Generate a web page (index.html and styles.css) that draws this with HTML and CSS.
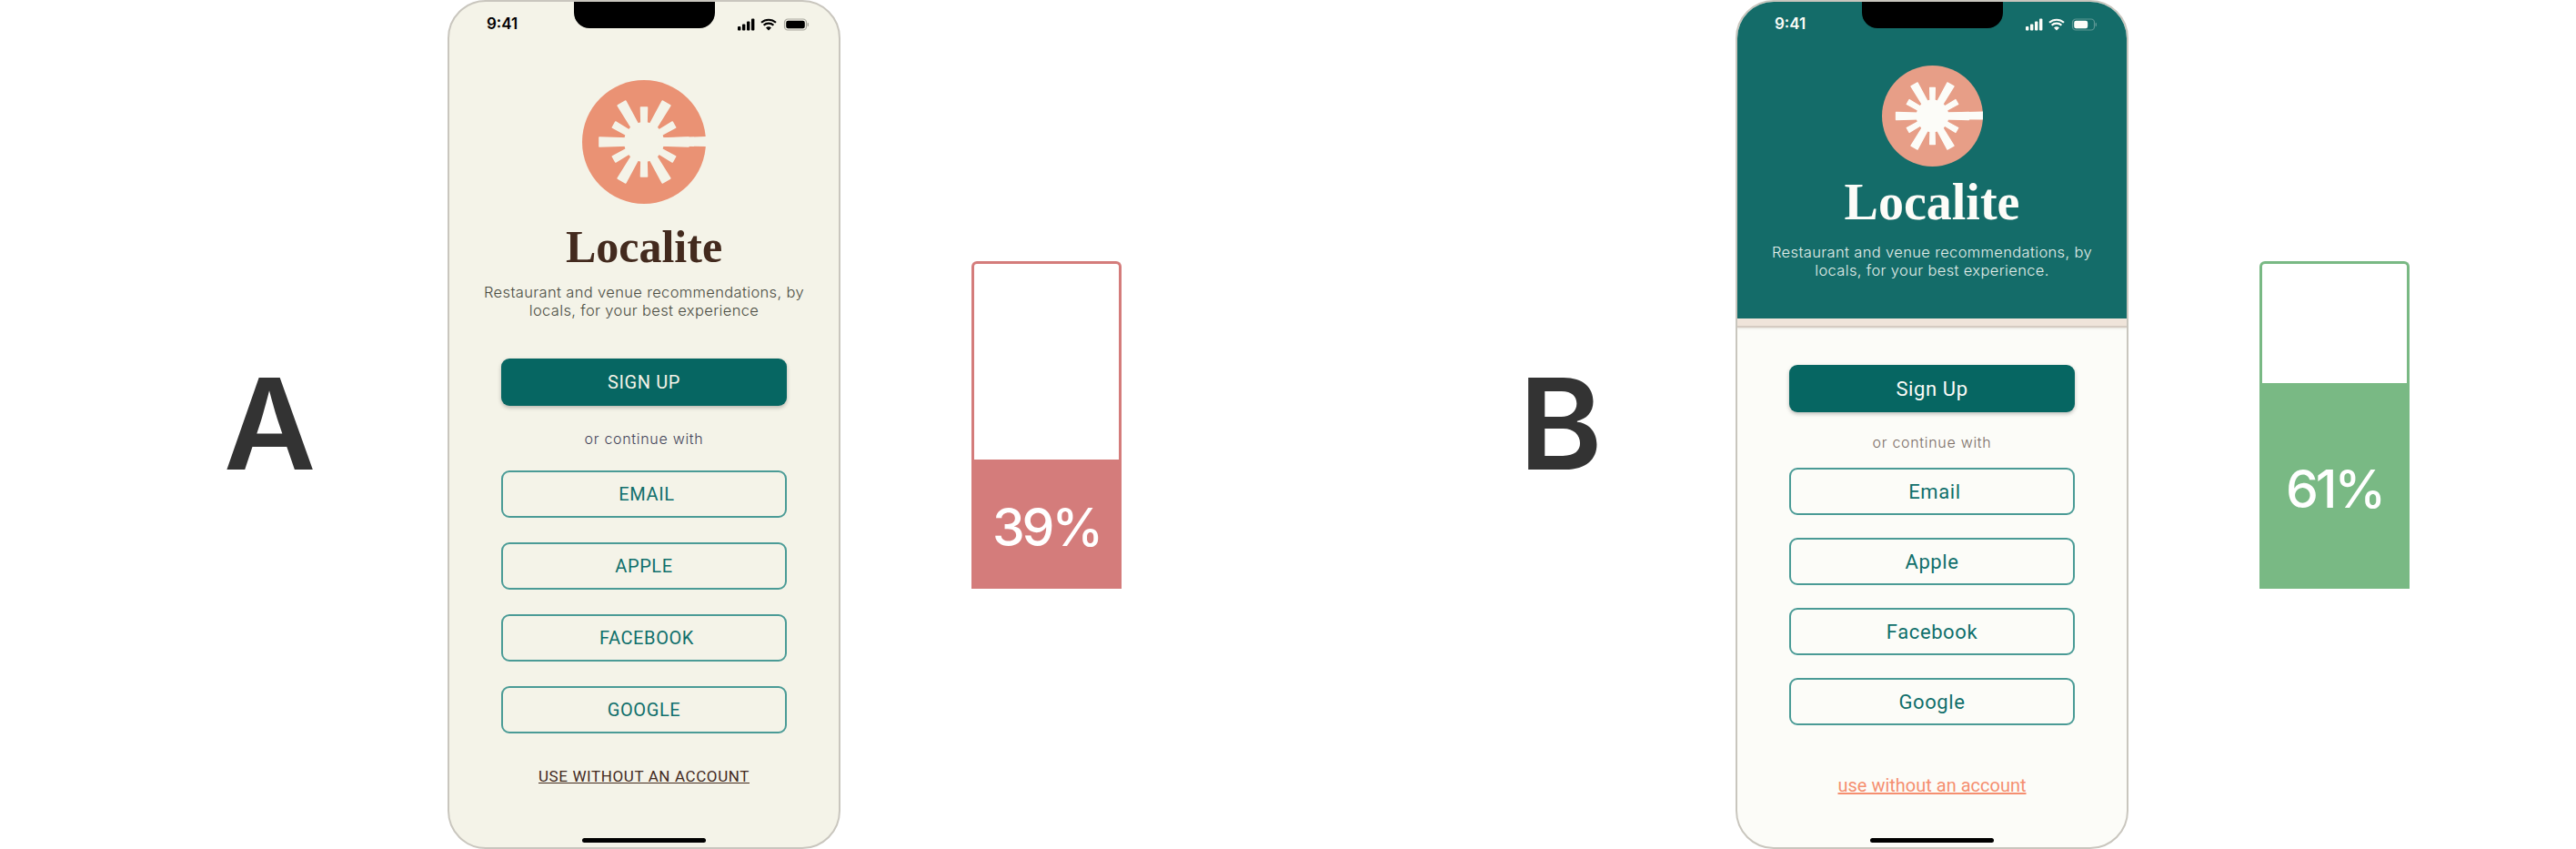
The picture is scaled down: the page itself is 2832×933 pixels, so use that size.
FILE: index.html
```html
<!DOCTYPE html>
<html lang="en">
<head>
  <meta charset="UTF-8" />
  <title>Localite A/B test</title>
  <link rel="stylesheet" href="styles.css">
</head>
<body>
  <div class="page">

    <!-- variant A -->
    <section class="variant variant-a">
      <div class="label">A</div>
      <div class="phone">
        <div class="notch"></div>
        <div class="status">
          <span class="time">9:41</span>
          <svg class="status-icons" viewBox="0 0 78 14" width="78" height="14">
            <defs>
              <g id="signal">
                <rect x="0" y="9" width="3.4" height="4.5" rx="1" />
                <rect x="5" y="6.5" width="3.4" height="7" rx="1" />
                <rect x="10" y="3.5" width="3.4" height="10" rx="1" />
                <rect x="15" y="0.5" width="3.4" height="13" rx="1" />
              </g>
              <g id="wifi">
                <path d="M26 4.8a12 12 0 0 1 16 0M28.6 7.8a8 8 0 0 1 10.8 0" fill="none" stroke="currentColor" stroke-width="2.2" />
                <path d="M31 10.6a4.4 4.4 0 0 1 6 0L34 13.6z" />
              </g>
            </defs>
            <use href="#signal" />
            <use href="#wifi" />
            <rect x="51.5" y="1" width="24" height="12" rx="3.6" fill="none" stroke="#a9a89e" stroke-width="1.2" />
            <rect x="53.2" y="2.7" width="20.6" height="8.6" rx="2.2" />
            <rect x="76.6" y="5" width="1.4" height="4" rx="0.7" fill="#a9a89e" />
          </svg>
        </div>

        <svg class="logo" viewBox="0 0 136 136" width="136" height="136">
          <defs>
            <g id="sun-rays">
              <circle cx="68" cy="68" r="22" />
              <polygon id="ray-long" points="86,64 117,63 117,73 86,72" stroke="currentColor" stroke-width="1.6" stroke-linejoin="round" />
              <polygon id="ray-short" points="86,65 106,64.5 106,71.5 86,71" stroke="currentColor" stroke-width="1.6" stroke-linejoin="round" />
              <use href="#ray-long" transform="rotate(60 68 68)" />
              <use href="#ray-long" transform="rotate(120 68 68)" />
              <use href="#ray-long" transform="rotate(180 68 68)" />
              <use href="#ray-long" transform="rotate(240 68 68)" />
              <use href="#ray-long" transform="rotate(300 68 68)" />
              <use href="#ray-short" transform="rotate(30 68 68)" />
              <use href="#ray-short" transform="rotate(90 68 68)" />
              <use href="#ray-short" transform="rotate(150 68 68)" />
              <use href="#ray-short" transform="rotate(210 68 68)" />
              <use href="#ray-short" transform="rotate(270 68 68)" />
              <use href="#ray-short" transform="rotate(330 68 68)" />
              <polygon points="84,63.5 136,62 136,73 84,72.5" />
            </g>
          </defs>
          <circle class="logo-disc" cx="68" cy="68" r="68" />
          <use href="#sun-rays" />
        </svg>

        <h1 class="title">Localite</h1>
        <p class="tagline">Restaurant and venue recommendations, by<br>locals, for your best experience</p>

        <a class="btn btn-primary">SIGN UP</a>
        <p class="or">or continue with</p>
        <div class="btn-list">
          <a class="btn btn-outline btn-nudge">EMAIL</a>
          <a class="btn btn-outline">APPLE</a>
          <a class="btn btn-outline btn-nudge">FACEBOOK</a>
          <a class="btn btn-outline">GOOGLE</a>
        </div>
        <a class="skip">USE WITHOUT AN ACCOUNT</a>
        <div class="home-bar"></div>
      </div>
      <div class="meter">
        <div class="meter-fill meter-fill-39">39%</div>
      </div>
    </section>

    <!-- variant B -->
    <section class="variant variant-b">
      <div class="label">B</div>
      <div class="phone">
        <div class="notch"></div>
        <header class="hero">
          <div class="status">
            <span class="time">9:41</span>
            <svg class="status-icons" viewBox="0 0 78 14" width="78" height="14">
              <use href="#signal" />
              <use href="#wifi" />
              <rect x="51.5" y="1" width="24" height="12" rx="3.6" fill="none" stroke="#5d9794" stroke-width="1.2" />
              <rect x="53.2" y="2.7" width="15" height="8.6" rx="2.2" />
              <rect x="76.6" y="5" width="1.4" height="4" rx="0.7" fill="#5d9794" />
            </svg>
          </div>
          <svg class="logo" viewBox="0 0 136 136" width="111" height="111">
            <circle class="logo-disc" cx="68" cy="68" r="68" />
            <use href="#sun-rays" />
          </svg>
          <h1 class="title">Localite</h1>
          <p class="tagline">Restaurant and venue recommendations, by<br>locals, for your best experience.</p>
        </header>
        <div class="hero-edge"></div>

        <a class="btn btn-primary">Sign Up</a>
        <p class="or">or continue with</p>
        <div class="btn-list">
          <a class="btn btn-outline btn-nudge">Email</a>
          <a class="btn btn-outline">Apple</a>
          <a class="btn btn-outline">Facebook</a>
          <a class="btn btn-outline">Google</a>
        </div>
        <a class="skip">use without an account</a>
        <div class="home-bar"></div>
      </div>
      <div class="meter">
        <div class="meter-fill meter-fill-61">61%</div>
      </div>
    </section>

  </div>
</body>
</html>
```

FILE: styles.css
```css
html, body {
  margin: 0;
  background: #fff;
}

.page {
  display: grid;
  grid-template-columns: 1416px 1416px;
  height: 933px;
  overflow: hidden;
}

.variant {
  display: flex;
  align-items: flex-start;
}

.label {
  width: 492px;
  box-sizing: border-box;
  margin-top: 378px;
  font-family: Inter, sans-serif;
  font-size: 139px;
  font-weight: 600;
  line-height: 175px;
  color: #333;
}

.variant-a .label { padding-left: 246px; }
.variant-b .label { padding-left: 254px; }

/* phone frame */
.phone {
  position: relative;
  display: flex;
  flex-direction: column;
  align-items: center;
  width: 432px;
  height: 933px;
  box-sizing: border-box;
  border: 2px solid #c9c6be;
  border-radius: 42px;
  overflow: hidden;
}

.variant-a .phone { background: #f4f3e8; color: #000; }
.variant-b .phone { background: #fcfcf8; }

.notch {
  position: absolute;
  top: 0;
  left: 137px;
  width: 155px;
  height: 29px;
  background: #000;
  border-radius: 0 0 17px 17px;
}

.status {
  display: flex;
  justify-content: space-between;
  align-items: center;
  align-self: stretch;
  flex: none;
  height: 48px;
  padding: 0 33px 0 41px;
}

.time {
  font-family: Inter, sans-serif;
  font-size: 17px;
  font-weight: 600;
}

.status-icons {
  fill: currentColor;
  margin-top: 1px;
}

/* logo */
.logo {
  display: block;
  fill: currentColor;
}

.variant-a .logo {
  margin-top: 38px;
  color: #f4f3e8;
}

.variant-b .logo {
  margin-top: 22px;
  color: #fcfcf8;
}

.logo-disc { fill: #ea9274; }
.variant-b .logo-disc { fill: #e79e87; }

.title {
  margin: 0;
  font-family: "Liberation Serif", serif;
  font-weight: 700;
}

.variant-a .title {
  margin-top: 23px;
  font-size: 50px;
  line-height: 48px;
  color: #432a1e;
}

.variant-b .title {
  margin-top: 11px;
  font-size: 56px;
  line-height: 56px;
  color: #fcfcf8;
}

.tagline {
  margin: 17px 0 0;
  font-family: Inter, sans-serif;
  font-size: 16.5px;
  font-weight: 300;
  line-height: 19.5px;
  letter-spacing: 0.35px;
  text-align: center;
  color: #4a4c42;
}

.variant-b .tagline {
  margin-top: 18px;
  color: #e3eeea;
}

.hero {
  display: flex;
  flex-direction: column;
  align-items: center;
  align-self: stretch;
  flex: none;
  height: 348px;
  background: #146c69;
  color: #fcfcf8;
}

.hero-edge {
  align-self: stretch;
  flex: none;
  height: 8px;
  background: #efe4da;
  border-bottom: 2px solid #d5cbc2;
  box-shadow: 0 1px 2px rgba(120, 110, 100, 0.2);
}

/* buttons */
.btn {
  display: flex;
  align-items: center;
  justify-content: center;
  flex: none;
  width: 314px;
  height: 52px;
  box-sizing: border-box;
  border-radius: 9px;
  font-family: Roboto, sans-serif;
  font-size: 20px;
  letter-spacing: 0.6px;
}

.btn-primary {
  background: #066662;
  color: #f4f3e8;
  box-shadow: 0 2px 4px rgba(0, 0, 0, 0.25);
}

.variant-a .btn-primary { margin-top: 43px; }
.variant-b .btn-primary { margin-top: 41px; color: #fcfcf8; font-size: 22px; }

.or {
  margin: 26px 0 0;
  font-family: Inter, sans-serif;
  font-size: 16px;
  font-weight: 300;
  line-height: 20px;
  letter-spacing: 0.7px;
  color: #44455a;
}

.variant-b .or {
  margin-top: 23px;
  color: #7a6d66;
}

.btn-list {
  display: flex;
  flex-direction: column;
  gap: 27px;
  margin-top: 25px;
}

.variant-b .btn-list {
  gap: 25px;
  margin-top: 18px;
}

.btn-outline {
  border: 2px solid #4a9b96;
  color: #0f6f6b;
}

.btn-nudge { padding-left: 6px; }

.variant-b .btn-outline { font-size: 22px; }

.skip {
  margin-top: 37px;
  font-family: Roboto, sans-serif;
  font-size: 17px;
  line-height: 20px;
  letter-spacing: 0.6px;
  text-decoration: underline;
  color: #432a1e;
}

.variant-b .skip {
  margin-top: 56px;
  font-size: 20px;
  letter-spacing: 0;
  color: #f58f70;
}

.home-bar {
  width: 136px;
  height: 5px;
  margin: auto 0 5px;
  background: #000;
  border-radius: 3px;
}

/* percentage meter */
.meter {
  display: flex;
  flex-direction: column;
  justify-content: flex-end;
  width: 165px;
  height: 360px;
  box-sizing: border-box;
  margin: 287px 0 0 144px;
  border-radius: 6px 6px 0 0;
}

.variant-a .meter { border: 3px solid #d47c7b; border-bottom: 0; }
.variant-b .meter { border: 3px solid #79b984; border-bottom: 0; }

.meter-fill {
  display: flex;
  align-items: center;
  justify-content: center;
  margin: 0 -3px;
  padding-top: 6px;
  box-sizing: border-box;
  font-family: Inter, sans-serif;
  font-size: 57px;
  font-weight: 500;
  letter-spacing: -3px;
  color: #fff;
}

.meter-fill-39 { height: 142px; background: #d47c7b; }
.meter-fill-61 { height: 226px; background: #79b984; }
```
